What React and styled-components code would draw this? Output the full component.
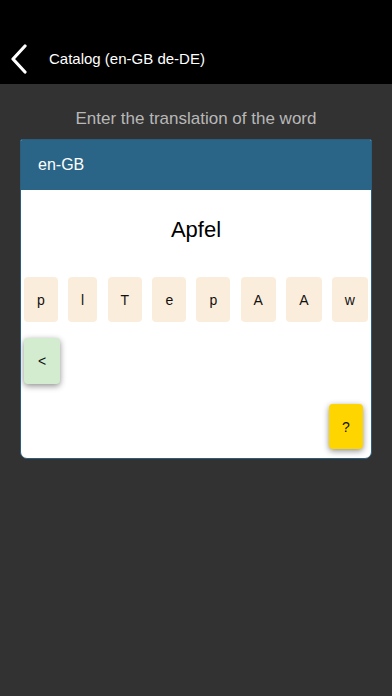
import React from "react";
import styled, { createGlobalStyle } from "styled-components";

const Global = createGlobalStyle`
  html, body { margin: 0; padding: 0; background: #323232; }
  body { font-family: "Liberation Sans", Arial, sans-serif; }
  #root { min-height: 696px; background: #323232; }
`;

const Screen = styled.div`
  width: 392px;
  min-height: 696px;
  background: #323232;
  display: flex;
  flex-direction: column;
`;

const NavBar = styled.header`
  background: #000;
  height: 50px;
  padding-top: 34px;
  display: flex;
  align-items: center;
`;

const BackButton = styled.button`
  background: none;
  border: none;
  padding: 0;
  width: 49px;
  height: 50px;
  display: flex;
  align-items: center;
  justify-content: flex-start;
  padding-left: 9px;
  box-sizing: border-box;
  margin-top: 0;
`;

const NavTitle = styled.h1`
  margin: 0;
  color: #fff;
  font-size: 15px;
  font-weight: 400;
  line-height: 20px;
`;

const Prompt = styled.p`
  margin: 24px 0 0;
  text-align: center;
  color: #b8b8b8;
  font-size: 17px;
  line-height: 22px;
`;

const Card = styled.section`
  margin: 9px 20px 0;
  background: #fff;
  border: 1px solid #2b5d7c;
  border-radius: 2px 2px 7px 7px;
  overflow: hidden;
  display: flex;
  flex-direction: column;
`;

const CardHeader = styled.div`
  background: #2a6587;
  height: 50px;
  display: flex;
  align-items: center;
  padding-left: 17px;
  color: #fff;
  font-size: 16px;
`;

const Word = styled.div`
  margin-top: 27px;
  text-align: center;
  font-size: 22px;
  line-height: 26px;
  color: #000;
`;

const TileRow = styled.div`
  margin-top: 34px;
  display: flex;
  justify-content: space-between;
  padding: 0 3px;
`;

const Tile = styled.div`
  height: 45px;
  padding: 0 13px;
  display: flex;
  align-items: center;
  justify-content: center;
  background: ${(p) => p.$bg || "#fbeddb"};
  border-radius: 4px;
  font-size: 14px;
  color: #111;
  box-shadow: ${(p) => (p.$raised ? "0 2px 6px rgba(0,0,0,0.45)" : "none")};
  width: ${(p) => (p.$w ? `${p.$w}px` : "auto")};
  box-sizing: border-box;
`;

const ActionRow = styled.div`
  display: flex;
  justify-content: ${(p) => p.$justify || "flex-start"};
  padding: ${(p) => p.$pad};
`;

const letters = ["p", "l", "T", "e", "p", "A", "A", "w"];

export default function App() {
  return (
    <>
      <Global />
      <Screen>
        <NavBar>
          <BackButton aria-label="Back">
            <svg width="20" height="30" viewBox="0 0 20 30">
              <path
                d="M16 2 L4 15 L16 28"
                fill="none"
                stroke="#fff"
                strokeWidth="3.2"
                strokeLinecap="round"
                strokeLinejoin="round"
              />
            </svg>
          </BackButton>
          <NavTitle>Catalog (en-GB de-DE)</NavTitle>
        </NavBar>
        <Prompt>Enter the translation of the word</Prompt>
        <Card>
          <CardHeader>en-GB</CardHeader>
          <Word>Apfel</Word>
          <TileRow>
            {letters.map((l, i) => (
              <Tile key={i}>{l}</Tile>
            ))}
          </TileRow>
          <ActionRow $pad="16px 0 0 3px">
            <Tile $bg="#d3eccf" $raised $w={36} style={{ height: 46 }}>
              &lt;
            </Tile>
          </ActionRow>
          <ActionRow $justify="flex-end" $pad="20px 8px 9px 0">
            <Tile $bg="#ffd500" $raised $w={34}>
              ?
            </Tile>
          </ActionRow>
        </Card>
      </Screen>
    </>
  );
}
